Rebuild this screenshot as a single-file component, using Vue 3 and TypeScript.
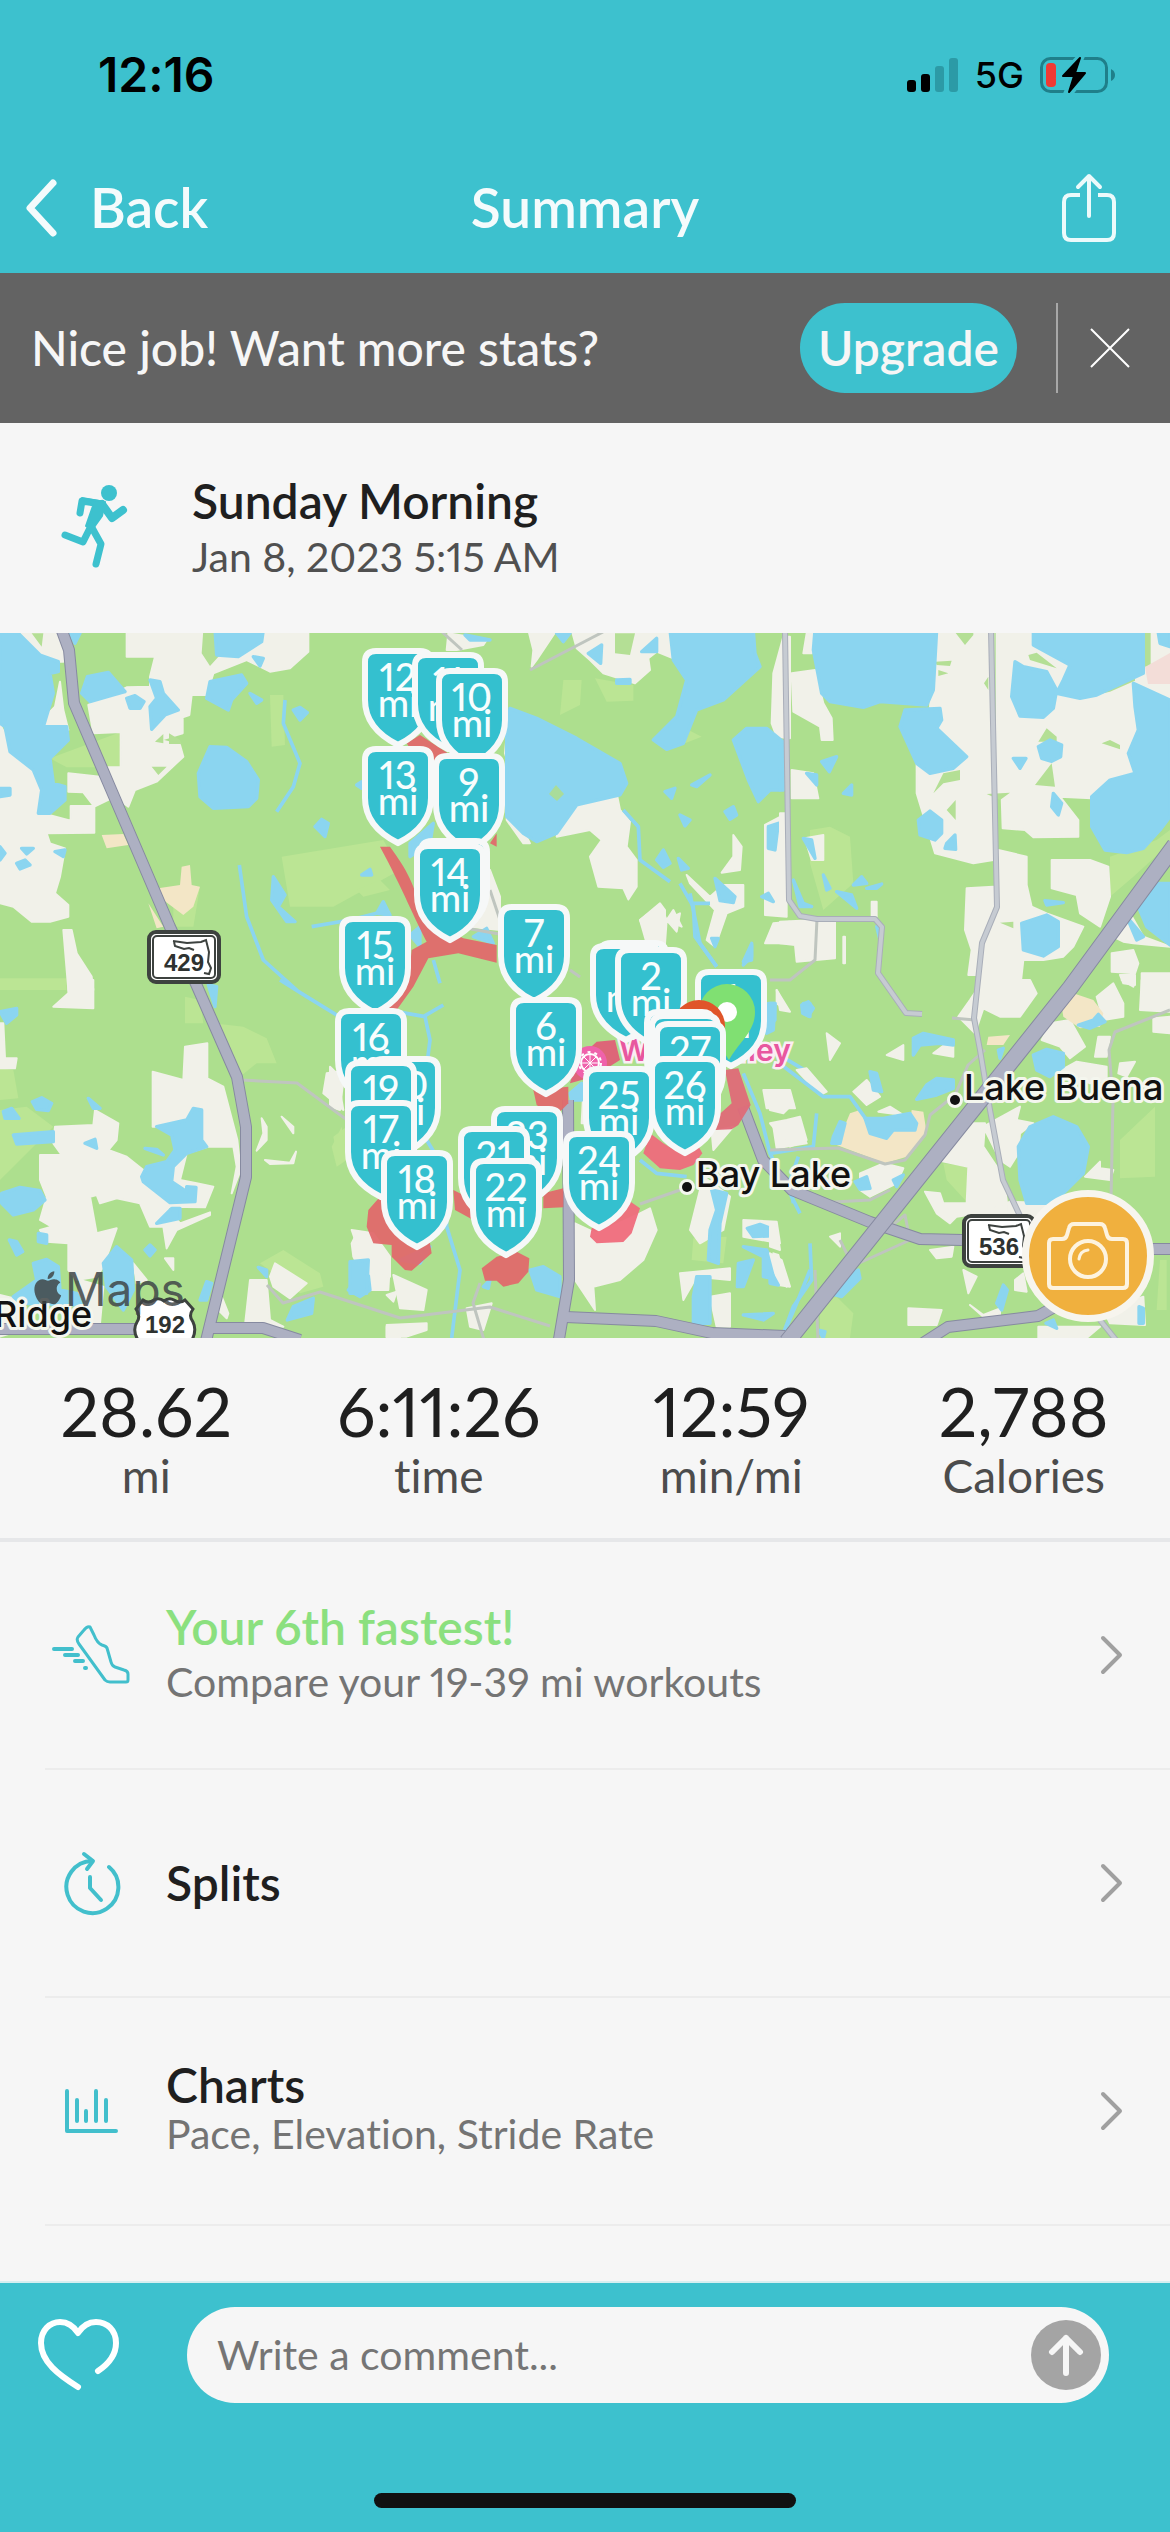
<script setup lang="ts">
import { ref } from 'vue'

interface Pin {
  id: number
  label: string
  unit: string
  x: number
  y: number
}

interface Stat {
  value: string
  unit: string
}

interface Area {
  x: number
  y: number
  land: string
  sand?: string
  meadow?: string
  water: string
  stream?: string
  grass?: string
}

const comment = ref('')

const stats: Stat[] = [
  { value: '28.62', unit: 'mi' },
  { value: '6:11:26', unit: 'time' },
  { value: '12:59', unit: 'min/mi' },
  { value: '2,788', unit: 'Calories' },
]

// Map areas are stored as tiles in thirds of a unit, each with its own origin.
const areas: Area[] = [
  {
    x: 0,
    y: 630,
    land: 'M55,0 190,0 190,95 175,95 125,75z M180,155 190,240 205,300 135,298 135,260 165,230z M0,283 40,360 120,450 120,520 110,545 212,572 212,528 283,528 283,608 140,610 150,640 195,655 180,740 165,790 205,825 205,860 150,875 95,875 40,830 0,820z M380,0 380,80 465,80 450,140 450,170 380,172 320,200 265,225 280,310 362,306 362,412 300,412 300,440 205,430 205,485 250,487 283,530 345,500 385,530 405,480 470,455 550,380 540,345 480,330 548,310 548,262 568,255 575,195 620,195 640,130 740,90 810,125 870,115 925,65 925,0z M190,900 215,900 230,970 275,1040 280,1080 205,1080z',
    sand: 'M305,615 370,612 385,645 320,655z M475,775 540,765 545,710 570,705 575,765 600,770 580,830 550,855 490,810z M445,820 490,890 470,895z',
    meadow: 'M810,195 850,195 855,345 815,350z M845,680 1150,630 1200,720 1000,830 870,830z M150,385 362,306 362,412 200,412z M0,1045 200,1045 200,1080 0,1080z M520,830 600,770 580,890 520,890z',
    water: 'M0,0 55,10 120,75 175,95 175,125 150,130 160,190 130,290 200,290 205,330 150,385 160,460 195,470 195,510 150,550 115,550 125,480 100,420 30,365 15,290 0,280z M0,475 30,475 30,495 0,500z M262,140 325,127 375,185 340,195 270,215 245,190z M380,205 405,197 432,215 420,235 390,235z M450,150 480,155 490,190 535,240 495,255 455,298 450,230 470,205z M645,0 790,0 785,35 715,80 650,75z M630,155 725,135 740,160 695,210 685,240 620,205z M760,80 790,85 780,108z M630,350 680,352 740,395 775,450 770,505 745,530 640,535 600,500 595,430z M750,190 785,210 770,220z M880,240 900,232 922,248 900,270z M945,590 965,568 985,580 975,620z M820,740 855,795 835,830 885,875 860,875 815,810z M65,655 100,655 80,672z M50,700 75,690 90,705 60,717z M165,665 195,660 190,680z M0,650 15,670 0,690z M210,10 240,10 225,40z M1085,735 1110,718 1115,735z M1130,850 1150,815 1170,855z M1070,465 1085,455 1085,475z',
    stream: 'M855,210 850,280 900,400 880,470 830,545 M718,705 740,860 790,990 890,1080 M935,890 1050,870 1130,850',
    grass: 'M465,335 490,312 490,340z M507,310 540,330 545,342 507,342z M455,410 500,410 475,435z M610,0 645,0 660,75 630,108 605,70z M95,10 130,10 125,50z M30,290 95,262 70,290z',
  },
  {
    x: 390,
    y: 630,
    land: 'M415,0 500,0 440,90 425,110 430,60z M545,0 835,0 850,85 800,65 775,85 780,120 735,160 640,130 600,90 560,55z M170,60 175,10 240,20 290,30 280,45 200,60z M355,260 345,370 360,420 350,570 400,640 420,640 380,560z M545,525 680,490 690,540 720,575 710,650 740,690 740,770 715,808 700,775 625,770 600,680 635,630 600,600 500,620 510,570z M1150,130 1180,20 1200,20 1200,325 1160,320 1145,280z M1125,585 1190,550 1190,860 1125,855z M1150,880 1200,875 1200,940 1125,940z M1030,615 1055,650 1050,720 995,728 1030,680z M890,735 960,800 1000,765 1060,765 1060,830 1010,850 975,950 950,930 975,840 900,760z M750,870 810,825 830,870 825,940 770,940z M830,870 870,850 860,905z M300,720 330,800 330,900 240,890z',
    meadow: 'M520,150 575,150 570,225 510,255z M615,145 730,165 730,212 650,215z M885,295 935,320 885,340z',
    water: 'M840,0 1090,0 1095,70 1110,110 1000,210 920,240 880,340 830,358 790,330 860,260 890,150 850,90z M360,235 440,265 560,325 690,400 710,460 690,495 560,525 500,610 440,635 400,610 350,560 350,300z M1030,330 1070,295 1130,295 1185,340 1180,480 1140,480 1105,515 1075,450z M595,70 635,45 632,100z M755,65 800,25 800,65z M225,15 300,30 240,30z M500,10 540,10 520,35z M905,465 960,435 920,470z M825,485 855,475 845,505z M870,555 900,570 885,588z M1005,545 1030,530 1040,555 1020,568z M1135,590 1165,580 1155,660 1135,655z M800,690 820,660 840,700 820,712z M865,685 895,715 875,720z M975,745 1035,800 1030,818 990,812z M680,150 720,148 720,160 680,160z M1060,1005 1085,945 1085,980z M60,640 130,580 120,640 60,680z M250,920 290,895 310,940z M1115,800 1135,790 1150,815z M965,925 985,925 975,950z',
    stream: 'M700,540 745,590 750,690 840,755 M870,760 910,830 915,920 980,1010 M900,820 960,820',
    grass: 'M675,10 735,10 720,75 675,70z',
  },
  {
    x: 780,
    y: 630,
    land: 'M470,0 640,0 640,690 580,700 465,670 410,490 410,400 480,300 450,230z M650,0 1170,0 1170,450 935,505 840,500 895,570 895,620 760,622 735,600 668,595 665,500 650,490z M655,660 740,680 740,765 755,830 800,850 910,890 880,950 850,980 790,990 730,990 720,1080 600,1080 605,940 655,830z M560,775 640,770 640,850 600,930 590,1035 565,1035 575,960 555,900z M815,690 930,690 985,710 990,800 960,890 900,850 890,795 815,775z M1000,880 1050,850 1090,920 1170,950 1060,940 1030,935 990,915z M35,130 105,120 130,220 155,265 158,330 125,330 120,290 40,245z M35,420 100,430 115,505 35,505z M80,10 105,10 95,70 70,70z M0,875 110,870 165,875 165,985 50,995 45,945 0,940z M75,625 130,615 130,690 95,690z M0,550 20,550 20,810 0,810z M275,815 290,815 290,860 275,860z M995,970 1060,960 1075,1000 1065,1030 995,1025z M1085,1030 1170,1030 1170,1080 1085,1080z M190,920 195,920 195,1000 190,1000z M1020,1035 1065,1035 1065,1065 1030,1060z',
    sand: '',
    meadow: 'M990,680 1130,630 1170,600 1170,640 1060,740 990,800z M90,600 150,590 210,620 220,760 130,840 90,700z',
    water: 'M105,0 470,0 460,180 440,225 300,215 250,232 150,215 125,190 100,60z M375,240 480,235 485,270 470,295 560,380 520,415 450,430 410,400 360,290z M415,570 450,543 485,570 485,610 465,630 420,615z M500,640 525,615 527,658 495,655z M760,0 1090,0 1090,130 950,195 900,205 830,190 850,150 870,105 760,45z M705,95 730,110 800,125 830,180 820,235 790,262 720,258 695,200z M1060,160 1170,210 1170,560 1140,600 1090,655 1040,668 975,660 935,590 935,500 990,450 1065,430 1045,370 1075,300 1065,230z M1135,10 1170,0 1170,50 1140,40z M775,350 810,330 845,345 842,380 815,394 785,385z M700,385 738,385 720,415z M820,490 845,520 835,555 815,530z M725,880 800,855 835,875 835,950 790,978 730,960z M1080,790 1130,760 1170,760 1170,945 1100,890 1075,830z M1040,860 1090,920 1070,930z M125,395 170,380 148,425z M80,430 110,435 110,465z M190,490 215,465 215,495z M40,750 70,820 95,830 60,830z M130,735 150,775 140,780z M220,765 245,740 260,760z M260,775 305,762 290,775z M170,785 215,795 230,835z M0,350 15,360 15,440 0,480z M70,625 95,630 105,685z M795,812 850,818 800,825z M290,890 300,890 300,930z',
    grass: 'M520,0 580,0 580,15 555,45z M465,95 515,92 510,108 470,105z M475,120 505,130 475,138z M745,75 770,68 830,115 750,90z M800,295 830,320 830,335 775,335z M965,340 990,330 1020,345 1020,358z M815,400 825,470 765,465z M460,490 490,430 540,420 540,450 490,460z M500,540 527,510 527,570z M660,878 700,875 700,895z M1120,460 1170,455 1170,500z M945,195 1065,140 1065,152 990,185z M625,140 625,180 612,160z M620,492 690,488 660,510z M1090,0 1112,0 1112,110 1090,110z',
  },
  {
    x: 0,
    y: 980,
    land: 'M205,0 280,0 280,85 160,80 205,40z M0,130 10,130 15,235 50,235 45,265 0,265z M458,275 550,300 555,200 622,190 622,295 670,320 712,480 722,570 695,640 710,560 700,500 625,500 560,520 540,600 590,610 640,620 615,682 500,680 540,730 630,697 630,705 530,750 500,805 490,740 450,740 420,670 350,655 300,670 290,645 270,650 290,760 350,745 310,860 290,890 230,900 205,870 205,790 140,785 120,750 155,740 120,720 140,650 120,600 120,525 185,525 160,490 165,440 280,435 285,390 355,430 350,480 325,510 380,530 430,570 520,560 530,440 458,440z M735,1035 750,900 800,900 810,1020 850,1040z M810,890 825,850 920,910 870,955 820,920z M1055,790 1070,760 1110,770 1120,820 1170,845 1165,930 1110,930 1060,830z M1160,1040 1200,1040 1200,1074 1160,1074z M980,280 1010,275 1030,390 970,340z M665,950 685,1000 680,1015 655,990z M785,415 800,440 800,480 770,512 790,460z M795,540 870,548 888,515 880,550 810,552z M845,410 880,440 880,460z M0,945 40,955 100,1040 0,1070z M240,900 310,920 300,1030 230,1030z M495,835 520,835 520,870z M400,850 440,900 410,910z M1160,945 1190,935 1180,965z',
    meadow: 'M0,265 40,270 55,355 0,360z M640,130 730,140 800,175 830,250 770,250 720,290 700,250z M780,850 850,810 960,880 970,920 900,940z M0,390 80,380 160,440 0,600z M555,50 600,60 610,130 555,130z M1000,470 1040,440 1040,540 1010,520z',
    water: 'M470,440 560,420 580,385 605,390 605,480 620,500 560,520 520,560 515,605 560,635 560,620 588,622 585,665 510,668 430,605 425,590 440,560 500,545 525,510 515,465z M470,730 515,685 540,685 540,715z M5,640 60,622 120,632 135,660 100,690 40,705 5,670z M40,465 160,455 160,485 50,492z M97,365 125,353 155,370 145,392 110,388z M10,395 35,385 57,415 15,415z M265,355 300,385 280,385z M255,490 285,478 290,505z M0,95 50,85 50,105 20,130z M310,850 350,800 395,840 400,930 370,990 320,920z M435,810 450,795 465,810 450,828z M115,760 140,765 140,790 115,785z M28,780 50,785 68,815 50,825z M100,850 140,838 175,860 180,930 230,940 250,975 60,970 40,950 110,900z M435,505 470,508 490,525z M625,15 650,20 645,80z M620,905 635,910 620,960 600,960z M862,1020 880,980 940,955 935,1000z M775,862 800,870 800,890z M1065,850 1100,840 1110,930 1080,950 1045,930 1075,890z',
    stream: 'M840,0 920,50 1010,105',
    grass: '',
  },
  {
    x: 330,
    y: 860,
    land: 'M930,180 990,130 1005,150 1005,260 960,250z M1010,180 1030,150 1055,200z M960,1045 980,1110 940,1200 870,1260 790,1280 795,1350 735,1260 735,1090 800,1120 930,1060z M1120,950 1200,1010 1180,1110 1110,1150 1080,1110z M0,620 40,660 30,750 0,740z M65,1110 130,1120 180,1190 180,1250 110,1240z M190,1245 290,1290 280,1350 210,1345z M410,1345 485,1330 460,1410 420,1400z M1300,690 1380,690 1395,745 1310,745z M1330,800 1400,780 1430,850 1340,865z M1240,1080 1340,1085 1350,1150 1240,1130z M1050,1240 1200,1225 1200,1260 1100,1250 1060,1320z M1140,1310 1200,1300 1200,1400 1160,1400z M1330,1180 1345,1185 1370,1280 1340,1260z M1145,815 1210,800 1150,870z M170,1395 290,1390 290,1410 230,1430 170,1430z M760,690 790,680 790,790 755,790z M1340,390 1370,450 1340,430z',
    sand: '',
    meadow: 'M1090,1135 1190,1130 1180,1210 1085,1200z M5,860 35,800 50,900 20,920z M80,90 150,60 180,90 100,110z',
    water: 'M600,1230 640,1220 690,1250 690,1310 620,1290z M1100,1250 1140,1250 1140,1390 1090,1390 1090,1310z M1145,990 1190,1000 1170,1090 1165,1210 1135,1200 1140,1110 1160,1050z M1252,1105 1290,1093 1322,1105 1315,1128 1270,1130z M1225,1210 1270,1200 1240,1280 1222,1280z M1240,1160 1310,1170 1350,1260 1300,1250 1300,1190z M1240,1365 1330,1360 1300,1380z M1240,305 1265,250 1265,300z M1315,430 1335,430 1330,510 1310,520z M1420,430 1440,430 1440,470 1420,460z M720,700 755,670 755,720 725,720z M60,1205 115,1200 110,1300 60,1300z M240,225 270,200 270,260z M460,1280 480,1260 475,1285z M210,1200 300,1160 270,1210z',
    stream: 'M200,455 285,470 300,540 290,620 M290,840 350,940 350,1100 390,1230 365,1434 M1080,100 1110,250 1160,320 M1240,640 1290,760 1320,880 1410,1060 M1340,580 1440,640 M1440,1230 1400,1330 1370,1400 M310,300 330,370 M280,470 340,435 M930,900 980,940 1070,950 M1330,730 1370,750',
    grass: '',
  },
  {
    x: 770,
    y: 980,
    land: 'M640,0 780,0 800,40 750,110 690,110 640,85 615,160 565,110 600,60z M1115,0 1200,0 1200,95 1110,90z M840,130 900,120 945,200 900,235 870,200 815,180z M980,50 1030,10 1060,70 1060,110 1000,120z M985,170 1020,170 1010,230 975,230z M1055,0 1095,0 1090,20z M1150,115 1200,110 1200,160 1150,155z M875,270 920,245 1010,260 1010,300 960,310z M1050,250 1095,245 1070,290 1045,280z M170,160 210,190 180,240z M350,225 400,195 400,240z M490,220 530,190 550,200 550,230z M250,335 290,300 330,350 290,375z M325,395 360,380 400,405z M80,270 110,265 170,335 150,345z M0,430 50,420 90,410 110,480 60,500z M0,340 70,370 40,400 0,390z M270,580 340,550 400,565 380,610 300,650 270,630z M560,430 645,430 640,500 700,590 710,660 710,700 630,700 560,710 540,730 500,700 465,635 510,640 520,670 590,670 595,560 500,540z M640,440 750,380 740,420 790,430 750,460 745,520 720,560 690,540z M945,590 990,545 990,565 1030,570 1020,600z M415,985 515,990 500,1035 415,1035z M480,810 550,800 545,830 500,835z M580,870 620,890 595,940z M735,900 760,880 770,935 735,930z M805,1040 990,1040 950,1074 805,1074z M1000,990 1120,950 1125,1035 1020,1030z M0,820 35,840 60,920 25,915z M180,770 210,760 210,800z M640,700 720,665 860,670 800,720z M600,975 640,1005 690,985 690,1005 640,1010z M20,30 60,95 30,90z M0,740 20,745 30,810 0,800z',
    sand: 'M240,400 270,390 290,420 320,460 420,430 425,390 460,395 470,460 410,530 345,550 200,495z M875,80 910,40 970,60 1000,100 990,140 930,145 880,110z M655,170 720,165 700,195 650,195z',
    meadow: 'M520,550 595,560 590,665 530,600z M1050,480 1155,380 1155,590 1050,595z M150,960 200,950 250,1000 240,1074 150,1074z M1170,840 1190,840 1190,990 1160,990z',
    water: 'M780,440 850,410 920,440 955,500 940,580 870,650 830,670 770,670 750,600 745,500z M790,225 830,208 880,220 880,260 840,290 800,270z M925,135 970,120 985,103 1005,125 960,145z M430,225 430,175 460,160 550,180 550,195 510,190 450,195z M285,415 340,415 420,400 440,430 435,450 370,450 350,475 300,460z M470,315 500,295 550,300 550,325 500,345 440,358z M300,275 320,280 335,335 310,330z M190,470 210,425 225,430 210,490 185,490z M95,75 115,65 130,85 115,108 98,100z M0,70 15,70 15,120 0,130z M255,605 290,590 300,625 270,628z M680,970 700,915 712,930 695,990z M220,890 265,870 270,895 215,950 195,945z M0,870 25,915 0,910z M685,210 700,205 690,235z M828,1030 850,1020 860,1045z M1107,980 1120,985 1120,1030 1107,1030z M370,600 400,585 380,620z M145,1050 165,1055 160,1074z',
    stream: 'M35,255 160,350 240,350 290,420 M140,400 130,500 0,520 M120,790 125,900 70,980 40,1060 M85,530 60,600 70,670',
    grass: '',
  },
]

// Wide roads carry a darker casing.
const highways = [
  'M58,620 69,650 74,703 110,787 170,927 196,984 237,1077 246,1127 246,1177 205,1345',
  'M568,1100 569,1280 558,1345',
  'M566,1317 656,1321 712,1333 785,1336',
  'M743,1107 763,1160 792,1190 870,1222 920,1239 962,1240',
  'M920,1345 948,1327 1038,1316 1060,1304',
  'M1150,1249 1175,1249',
  'M-5,1329 145,1329',
  'M205,1328 263,1328 300,1340',
]

const streets = [
  'M785,630 789,900 800,916 817,919 875,919 882,927 878,973 906,1013 922,1014',
  'M991,630 997,907 982,943 974,1018 980,1050 990,1110 1003,1180 1022,1220',
  'M1100,1320 1120,1345',
]

const lanes = [
  'M530,670 603,632',
  'M440,630 462,650',
  'M817,919 815,960 790,980 770,980',
  'M242,1080 297,1083 347,1120',
  'M267,1285 283,1303 320,1292 400,1318 490,1307 550,1326',
  'M480,1283 473,1303 484,1340',
  'M770,1150 838,1148 885,1164 905,1160 925,1135 930,1115 955,1095 968,1065 985,1050',
  'M1170,1010 1115,1032 1109,1050 1113,1100 1111,1200',
  'M815,1203 870,1200 890,1190',
  'M840,1240 850,1260 905,1215 910,1240',
  'M855,1265 910,1240',
  'M640,1204 680,1190',
  'M570,970 580,977',
  'M815,1270 818,1340',
  'M952,1018 975,1020',
  'M490,890 505,935 465,928',
]

const pin = (id: number, x: number, y: number, label = String(id), unit = 'mi'): Pin => ({ id, label, unit, x, y })

// Painted in this order; a pin lying fully under its neighbours has no caption.
const basePins: Pin[] = [
  pin(12, 398, 648),
  pin(11, 448, 652),
  pin(10, 472, 668),
  pin(13, 398, 746),
  pin(9, 469, 753),
  pin(8, 454, 838, '', ''),
  pin(14, 450, 843),
  pin(7, 534, 904),
  pin(15, 375, 916),
  pin(4, 633, 940, '', ''),
  pin(3, 626, 943, ''),
  pin(2, 651, 947),
  pin(1, 731, 969),
]

const frontPins: Pin[] = [
  pin(6, 546, 997),
  pin(16, 371, 1008),
  pin(5, 680, 1009, '', ''),
  pin(28, 685, 1013, '', ''),
  pin(27, 690, 1021),
  pin(20, 405, 1056),
  pin(19, 381, 1060),
  pin(25, 619, 1066),
  pin(26, 685, 1056),
  pin(17, 381, 1100),
  pin(23, 527, 1106),
  pin(21, 494, 1126),
  pin(24, 599, 1131),
  pin(18, 417, 1150),
  pin(22, 506, 1158),
]
</script>

<template>
  <div class="app">
    <header class="top">
      <div class="status">
        <span class="clock">12:16</span>
        <div class="indicators">
          <svg width="52" height="36" viewBox="0 0 52 36" aria-hidden="true">
            <rect x="0" y="23" width="9" height="12" rx="3" fill="#000" />
            <rect x="14" y="17" width="9" height="18" rx="3" fill="#000" />
            <rect x="28" y="9" width="9" height="26" rx="3" fill="#2c9aa6" />
            <rect x="42" y="1" width="9" height="34" rx="3" fill="#2c9aa6" />
          </svg>
          <span class="network">5G</span>
          <svg width="76" height="38" viewBox="0 0 76 38" aria-hidden="true">
            <rect x="1.5" y="2.5" width="65" height="33" rx="9" fill="none" stroke="#1f7f8a" stroke-width="3" />
            <path d="M71,13 q4,2 4,6 t-4,6z" fill="#1f7f8a" />
            <rect x="6" y="7" width="10" height="24" rx="4" fill="#f03a34" />
            <path d="M39,0 20,21 h12 L25,38 h6 L48,16 H36 L43,0z" fill="#3dc1ce" stroke="#3dc1ce" stroke-width="4" />
            <path d="M40,2 23,20 h11 L29,36 45,17 H35z" fill="#000" stroke="#000" stroke-width="2" stroke-linejoin="round" />
          </svg>
        </div>
      </div>
      <nav class="nav">
        <button class="back" type="button">
          <svg width="36" height="60" viewBox="0 0 36 60" aria-hidden="true">
            <path d="M31,5 8,30 31,55" fill="none" stroke="#f4fbfc" stroke-width="7" stroke-linecap="round" stroke-linejoin="round" />
          </svg>
          <span>Back</span>
        </button>
        <h1 class="title">Summary</h1>
        <button class="share" type="button" aria-label="Share">
          <svg width="54" height="70" viewBox="0 0 54 70" fill="none" stroke="#ecfafb" stroke-width="4" stroke-linecap="round" stroke-linejoin="round" aria-hidden="true">
            <path d="M18,22 H9 Q2,22 2,29 V60 Q2,67 9,67 H45 Q52,67 52,60 V29 Q52,22 45,22 H36" stroke-linecap="butt" />
            <path d="M27,43 V3 M16,14 27,3 38,14" />
          </svg>
        </button>
      </nav>
    </header>

    <section class="banner">
      <p class="pitch">Nice job! Want more stats?</p>
      <button class="upgrade" type="button">Upgrade</button>
      <span class="rule"></span>
      <button class="close" type="button" aria-label="Close">
        <svg width="40" height="40" viewBox="0 0 40 40" aria-hidden="true">
          <path d="M1,1 39,39 M39,1 1,39" stroke="#fff" stroke-width="2" />
        </svg>
      </button>
    </section>

    <section class="activity">
      <svg class="runner" width="70" height="86" viewBox="0 0 70 86" fill="none" stroke="#3dc1ce" stroke-width="7" stroke-linecap="round" stroke-linejoin="round" aria-hidden="true">
        <circle cx="49" cy="9" r="8" fill="#3dc1ce" stroke="none" />
        <path d="M20,29 22,17 42,20" />
        <path d="M42,20 52,34 63,26" stroke-width="8" />
        <path d="M22,14 45,18 42,32 32,46 26,42 33,22z" fill="#3dc1ce" stroke-width="2" />
        <path d="M32,40 23,58 5,51" />
        <path d="M31,42 41,60 36,80" />
      </svg>
      <div>
        <h2 class="activity-name">Sunday Morning</h2>
        <p class="activity-date">Jan 8, 2023 5:15 AM</p>
      </div>
    </section>

    <section class="map">
      <svg class="map-art" viewBox="0 633 1170 705" role="img" aria-label="Route map">
        <rect x="0" y="633" width="1170" height="705" fill="#addf8e" />
        <g v-for="area in areas" :key="`${area.x}-${area.y}`" :transform="`translate(${area.x} ${area.y}) scale(.33333)`" stroke-linejoin="round">
          <path :d="area.meadow" fill="#bbe594" />
          <path :d="area.land" fill="#f1f1e9" stroke="#f1f1e9" stroke-width="6" />
          <path :d="area.sand" fill="#f3e6c6" />
          <path :d="area.grass" fill="#b4df95" />
          <path :d="area.water" fill="#8bd5f0" stroke="#8bd5f0" stroke-width="10" />
          <path :d="area.stream" fill="none" stroke="#8bd5f0" stroke-width="11" />
        </g>
        <path d="M549,794 556,785 564,794 557,801z" fill="#a9dc9a" />
        <path d="M1145,667 1170,653 1170,684 1148,684z" fill="#f3ddd8" />

        <g fill="none" stroke-linejoin="round">
          <path v-for="d in lanes" :key="d" :d="d" stroke="#bfc5bf" stroke-width="3" />
          <g v-for="d in streets" :key="d">
            <path :d="d" stroke="#a9aeb9" stroke-width="6" />
            <path :d="d" stroke="#c6cbd2" stroke-width="4" />
          </g>
          <path v-for="d in highways" :key="d" :d="d" stroke="#868aa0" stroke-width="12" />
          <path v-for="d in highways" :key="d + 'f'" :d="d" stroke="#adb0c2" stroke-width="10" />
          <path d="M1175,845 1070,988 787,1342" stroke="#868aa0" stroke-width="17" />
          <path d="M1175,845 1070,988 787,1342" stroke="#adb0c2" stroke-width="15" />
        </g>

        <g transform="translate(330 860) scale(.33333)" fill="#e0696b" fill-opacity=".95">
          <path d="M180,-40 C230,30 255,70 275,170 L400,235 500,255 500,308 385,280 295,295 250,380 200,450 120,460 200,400 240,320 245,270 290,245 C260,190 215,80 150,-40z" />
          <path d="M110,1100 115,1050 150,1010 200,1060 300,1150 305,1180 245,1232 225,1230 185,1190 185,1155 130,1150z" />
          <path d="M455,1225 500,1190 560,1175 598,1195 595,1235 565,1270 520,1280 500,1262 465,1262z" />
          <path d="M370,990 430,1020 430,1080 375,1050z M640,1000 700,985 700,1042 640,1045z" />
          <path d="M880,1010 930,1045 905,1120 880,1146 800,1150 780,1130 785,1105 850,1080z" fill="#ef6b7c" />
          <path d="M610,690 715,680 715,730 690,755 650,755 620,735z" />
          <path d="M720,670 740,600 800,545 855,540 870,600 790,650z" fill="#df5f77" />
          <path d="M940,880 960,820 1000,850 1050,880 1100,850 1117,880 1090,915 1050,930 990,925z" fill="#ee6b7c" />
          <path d="M1185,630 1225,625 1262,735 1225,795 1205,808 1155,810 1160,770 1205,730z" fill="#df6a78" />
          <path d="M230,-350 270,-375 370,-310 310,-290 250,-320z M480,-50 500,-80 500,-40z" />
        </g>

        <g class="place">
          <circle cx="687" cy="1187" r="5" />
          <text x="696" y="1187">Bay Lake</text>
          <circle cx="955" cy="1100" r="5" />
          <text x="964" y="1100">Lake Buena</text>
          <text x="-6" y="1327">Ridge</text>
        </g>
        <circle cx="590" cy="1063" r="17" fill="#ef62ab" />
        <g fill="none" stroke="#fff" stroke-width="2">
          <circle cx="590" cy="1063" r="9" />
          <circle cx="590" cy="1063" r="11" stroke-dasharray="3 4" />
          <path d="M590,1054 v18 M581,1063 h18 M584,1057 l12,12 M596,1057 l-12,12" stroke-width="1" />
        </g>
        <text class="attraction" x="619" y="1061">Walt Disney</text>

        <g>
          <rect x="149" y="932" width="70" height="50" rx="7" fill="#fff" stroke="#3d423f" stroke-width="4" />
          <rect x="153" y="936" width="62" height="42" rx="4" fill="none" stroke="#3d423f" stroke-width="2" />
          <path d="M173,941 l14,2 14,-1 5,-2 3,12 -1,10 3,6 -2,6 -5,-1 M174,942 l1,4 9,3 5,-1 5,2" fill="none" stroke="#3d423f" stroke-width="2" />
          <text class="shield" x="184" y="971">429</text>
          <rect x="964" y="1216" width="70" height="50" rx="7" fill="#fff" stroke="#3d423f" stroke-width="4" />
          <rect x="968" y="1220" width="62" height="42" rx="4" fill="none" stroke="#3d423f" stroke-width="2" />
          <path d="M988,1225 l14,2 14,-1 5,-2 3,12 -1,10 3,6 -2,6 -5,-1 M989,1226 l1,4 9,3 5,-1 5,2" fill="none" stroke="#3d423f" stroke-width="2" />
          <text class="shield" x="999" y="1255">536</text>
          <path d="M143,1300 q5,4 11,0 q5,-3 10,1 q5,-4 10,-1 q6,4 11,0 l8,9 q-5,7 0,13 q4,8 -1,18 h-54 q-6,-10 -1,-18 q4,-6 -1,-13z" fill="#fff" stroke="#3d423f" stroke-width="3" />
          <text class="shield" x="165" y="1333">192</text>
        </g>

        <g fill="#3f4547" fill-opacity=".85">
          <path transform="translate(28 1268) scale(1.65)" d="M18.71,19.5c-.83,1.24-1.71,2.45-3.05,2.47-1.34.03-1.77-.79-3.29-.79-1.53,0-2,.77-3.27.82-1.31.05-2.3-1.32-3.14-2.53C4.25,17,2.94,12.45,4.7,9.39c.87-1.52,2.43-2.48,4.12-2.51,1.28-.02,2.5.87,3.29.87.78,0,2.26-1.07,3.81-.91.65.03,2.47.26,3.64,1.98-.09.06-2.17,1.28-2.15,3.81.03,3.02,2.65,4.03,2.68,4.04-.03.07-.42,1.44-1.38,2.83M13,3.5c.73-.83,1.94-1.46,2.94-1.5.13,1.17-.34,2.35-1.04,3.19-.69.85-1.83,1.51-2.95,1.42-.15-1.15.41-2.35,1.05-3.11z" />
          <text class="credit" x="65" y="1306">Maps</text>
        </g>

        <g v-for="p in basePins" :key="p.id" :transform="`translate(${p.x} ${p.y})`">
          <path class="pin" d="M-22,3 H22 Q33,3 33,14 V52 C33,73 20,87 0,97 C-20,87 -33,73 -33,52 V14 Q-33,3 -22,3z" />
          <text v-if="p.label" class="pin-text" x="0" y="43">{{ p.label }}</text>
          <text v-if="p.unit" class="pin-text" x="0" y="69">{{ p.unit }}</text>
        </g>

        <path d="M699,1012 a28,28 0 1 1 56,0 c0,20 -16,30 -26,48 c-10,-18 -30,-28 -30,-48z" fill="#80e072" />
        <circle cx="727" cy="1012" r="10" fill="#fff" />
        <circle cx="699" cy="1026" r="26" fill="#e0552a" />

        <g v-for="p in frontPins" :key="p.id" :transform="`translate(${p.x} ${p.y})`">
          <path class="pin" d="M-22,3 H22 Q33,3 33,14 V52 C33,73 20,87 0,97 C-20,87 -33,73 -33,52 V14 Q-33,3 -22,3z" />
          <text v-if="p.label" class="pin-text" x="0" y="43">{{ p.label }}</text>
          <text v-if="p.unit" class="pin-text" x="0" y="69">{{ p.unit }}</text>
        </g>
      </svg>
      <button class="camera" type="button" aria-label="Add photo">
        <svg width="82" height="68" viewBox="0 0 82 68" fill="none" stroke="#fdf3df" stroke-width="4" stroke-linecap="round" stroke-linejoin="round" aria-hidden="true">
          <path d="M6,17 H15 Q19,17 20,13 L22,6 Q23,2 27,2 H53 Q57,2 58,6 L60,13 Q61,17 65,17 H76 Q80,17 80,21 V62 Q80,66 76,66 H6 Q2,66 2,62 V21 Q2,17 6,17z" />
          <circle cx="41" cy="37" r="18" />
          <path d="M32,37 Q33,29 41,28" stroke-width="3" />
        </svg>
      </button>
    </section>

    <dl class="stats">
      <div v-for="stat in stats" :key="stat.unit" class="stat">
        <dd class="stat-value">{{ stat.value }}</dd>
        <dt class="stat-unit">{{ stat.unit }}</dt>
      </div>
    </dl>

    <main class="rows">
      <a class="row" href="#compare">
        <span class="row-icon">
          <svg width="80" height="60" viewBox="0 0 80 60" fill="none" stroke="#42bfcc" stroke-width="3" stroke-linecap="round" stroke-linejoin="round" aria-hidden="true">
            <path d="M39,2 Q36,1 33,5 L27,12 Q25,15 28,19 L54,55 Q56,57 59,57 H75 Q77,57 77,55 V49 Q77,46 73,45 L64,42 Q61,41 60,37 L56,23 Q55,21 51,20 Q46,18 43,10z" />
            <path d="M3,24 H21 M14,30 H27 M24,36 H32 M34,43 h1" stroke-width="4" />
          </svg>
        </span>
        <span class="row-body">
          <span class="row-title best">Your 6th fastest!</span>
          <span class="row-note">Compare your 19-39 mi workouts</span>
        </span>
        <svg class="chevron" width="24" height="40" viewBox="0 0 24 40" aria-hidden="true"><path d="M3,3 20,20 3,37" /></svg>
      </a>
      <a class="row" href="#splits">
        <span class="row-icon">
          <svg width="60" height="66" viewBox="0 0 60 66" fill="none" stroke="#42bfcc" stroke-width="4" stroke-linecap="round" stroke-linejoin="round" aria-hidden="true">
            <path d="M48,17 A26,26 0 1 1 31,11" />
            <path d="M23,4 32,11 26,19" />
            <path d="M29,27 V38 L40,50" />
          </svg>
        </span>
        <span class="row-body">
          <span class="row-title">Splits</span>
        </span>
        <svg class="chevron" width="24" height="40" viewBox="0 0 24 40" aria-hidden="true"><path d="M3,3 20,20 3,37" /></svg>
      </a>
      <a class="row" href="#charts">
        <span class="row-icon">
          <svg width="56" height="46" viewBox="0 0 56 46" fill="none" stroke="#42bfcc" stroke-width="4" stroke-linecap="round" stroke-linejoin="round" aria-hidden="true">
            <path d="M4,3 V43 H53 M14,12 V33 M23,23 V33 M33,3 V33 M43,12 V33" />
          </svg>
        </span>
        <span class="row-body compact">
          <span class="row-title">Charts</span>
          <span class="row-note">Pace, Elevation, Stride Rate</span>
        </span>
        <svg class="chevron" width="24" height="40" viewBox="0 0 24 40" aria-hidden="true"><path d="M3,3 20,20 3,37" /></svg>
      </a>
    </main>

    <footer class="bottom">
      <form class="composer" @submit.prevent>
        <button class="like" type="button" aria-label="Like">
          <svg width="84" height="76" viewBox="0 0 84 76" aria-hidden="true">
            <path d="M41,70 C22,58 4,45 4,26 C4,13 13,5 23,5 Q34,5 41,16 Q48,5 59,5 C70,5 79,13 79,26 Q79,42 61,54" fill="none" stroke="#fff" stroke-width="6" stroke-linecap="round" stroke-linejoin="round" />
          </svg>
        </button>
        <div class="field">
          <input v-model="comment" class="comment" type="text" aria-label="Comment" placeholder="Write a comment..." />
          <button class="send" type="submit" aria-label="Send">
            <svg width="36" height="42" viewBox="0 0 36 42" aria-hidden="true">
              <path d="M18,39 V4 M4,18 18,4 32,18" fill="none" stroke="#f6f6f6" stroke-width="6" stroke-linecap="round" stroke-linejoin="round" />
            </svg>
          </button>
        </div>
      </form>
      <div class="home"></div>
    </footer>
  </div>
</template>

<style>
body {
  background: #f6f6f6;
}
</style>

<style scoped>
.app {
  display: flex;
  flex-direction: column;
  min-height: 100vh;
  background: #f6f6f6;
  color: #1f1f1f;
  font-family: Lato, "Open Sans", sans-serif;
  font-variant-ligatures: none;
  font-variant-numeric: proportional-nums;
}

h1,
h2,
p,
dl,
dd {
  margin: 0;
}

button {
  margin: 0;
  padding: 0;
  border: 0;
  background: none;
  color: inherit;
  font: inherit;
}

svg {
  display: block;
}

.top {
  background: #3dc1ce;
}

.status {
  display: flex;
  align-items: center;
  justify-content: space-between;
  padding: 48px 54px 40px 98px;
  color: #000;
  font-family: Inter, sans-serif;
}

.clock {
  font-size: 48px;
  font-weight: 600;
  line-height: 54px;
}

.indicators {
  display: flex;
  align-items: center;
  gap: 16px;
}

.network {
  font-size: 36px;
  font-weight: 500;
  line-height: 54px;
}

.nav {
  display: grid;
  grid-template-columns: 1fr auto 1fr;
  align-items: center;
  padding: 0 22px;
  color: #f4fbfc;
  font-size: 55px;
  font-weight: 600;
  line-height: 131px;
}

.back {
  display: flex;
  align-items: center;
  gap: 32px;
}

.title {
  font-size: 55px;
  font-weight: 600;
}

.share {
  justify-self: end;
  margin-right: 32px;
}

.banner {
  display: flex;
  align-items: center;
  padding: 30px 40px 30px 31px;
  background: #636363;
  color: #f6f6f6;
}

.pitch {
  flex: 1;
  font-size: 48px;
  font-weight: 500;
  line-height: 90px;
}

.upgrade {
  padding: 0 18px;
  border-radius: 45px;
  background: #3dc1ce;
  font-size: 48px;
  font-weight: 600;
  line-height: 90px;
}

.rule {
  width: 2px;
  height: 90px;
  margin: 0 32px 0 39px;
  background: #a8a8a8;
}

.activity {
  display: flex;
  align-items: center;
  gap: 62px;
  padding: 48px 60px 50px;
}

.activity-name {
  font-size: 48px;
  font-weight: 600;
  line-height: 60px;
}

.activity-date {
  color: #505050;
  font-size: 41px;
  line-height: 52px;
}

.map {
  position: relative;
}

.map-art {
  width: 100%;
  height: auto;
}

.place {
  fill: #111;
  stroke: #f4f6ee;
  stroke-width: 6px;
  stroke-linejoin: round;
  paint-order: stroke;
  font-family: Inter, sans-serif;
  font-size: 36px;
  font-weight: 500;
}

.attraction {
  fill: #e8579f;
  stroke: #fbeef4;
  stroke-width: 5px;
  paint-order: stroke;
  font-family: Inter, sans-serif;
  font-size: 30px;
  font-weight: 600;
}

.shield {
  fill: #2e3230;
  font-family: "Liberation Sans Narrow", "Liberation Sans", sans-serif;
  font-size: 24px;
  font-weight: 700;
  text-anchor: middle;
}

.credit {
  font-family: Inter, sans-serif;
  font-size: 46px;
}

.pin {
  fill: #34c0cf;
  stroke: #f6f8f8;
  stroke-width: 6px;
}

.pin-text {
  fill: #f8fdfd;
  font-size: 38px;
  font-weight: 500;
  text-anchor: middle;
}

.camera {
  position: absolute;
  right: 16px;
  bottom: 16px;
  display: grid;
  place-items: center;
  width: 132px;
  height: 132px;
  border: 7px solid #f7f5ee;
  border-radius: 50%;
  background: #f0b03e;
}

.stats {
  display: grid;
  grid-template-columns: repeat(4, 1fr);
  padding: 35px 0;
  border-bottom: 4px solid #e6e7e9;
  text-align: center;
}

.stat {
  display: flex;
  flex-direction: column;
}

.stat-value {
  font-size: 68px;
  line-height: 76px;
}

.stat-unit {
  color: #4c4c4c;
  font-size: 46px;
  line-height: 54px;
}

.rows {
  flex: 1;
}

.row {
  display: flex;
  align-items: center;
  min-height: 226px;
  margin-left: 45px;
  padding-right: 46px;
  border-bottom: 2px solid #ececec;
  color: inherit;
  text-decoration: none;
}

.row-icon {
  display: grid;
  place-items: center;
  width: 92px;
  margin-right: 29px;
}

.row-body {
  display: flex;
  flex: 1;
  flex-direction: column;
}

.row-title {
  font-size: 48px;
  font-weight: 600;
  line-height: 58px;
}

.row-note {
  padding-bottom: 4px;
  color: #747474;
  font-size: 41px;
  line-height: 52px;
}

.compact .row-title {
  line-height: 50px;
}

.compact .row-note {
  line-height: 48px;
}

.best {
  color: #8be07f;
}

.chevron path {
  fill: none;
  stroke: #a0a0a0;
  stroke-width: 4px;
  stroke-linecap: round;
  stroke-linejoin: round;
}

.bottom {
  padding: 24px 0;
  border-top: 2px solid #d5eff1;
  background: #3dc1ce;
}

.composer {
  display: flex;
  align-items: center;
  gap: 66px;
  padding: 0 61px 0 37px;
}

.field {
  display: flex;
  flex: 1;
  align-items: center;
  padding: 13px 8px 13px 30px;
  border-radius: 48px;
  background: #f6f6f6;
}

.comment {
  flex: 1;
  min-width: 0;
  padding: 0;
  border: 0;
  outline: 0;
  background: none;
  color: #1f1f1f;
  font-family: inherit;
  font-size: 41px;
  line-height: 50px;
}

.comment::placeholder {
  color: #757575;
  opacity: 1;
}

.send {
  display: grid;
  place-items: center;
  width: 70px;
  height: 70px;
  border-radius: 50%;
  background: #a4a4a4;
}

.home {
  width: 36%;
  height: 15px;
  margin: 90px auto 0;
  border-radius: 8px;
  background: #111;
}
</style>
